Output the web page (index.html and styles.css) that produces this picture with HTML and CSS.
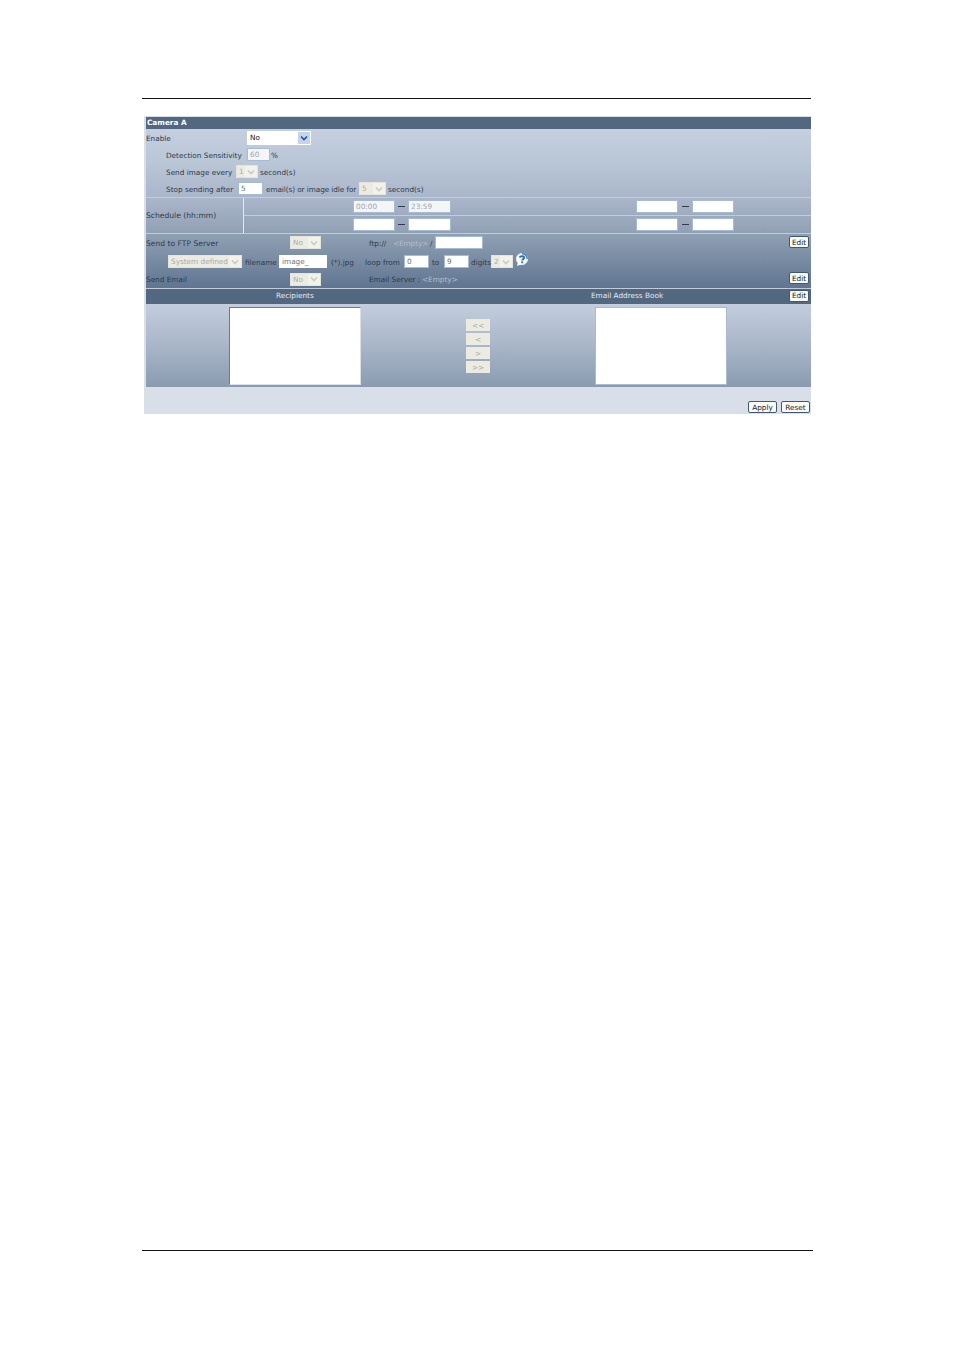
FILE: index.html
```html
<!DOCTYPE html>
<html lang="en">
<head>
    <meta charset="UTF-8">
    <link rel="stylesheet" href="styles.css">
    <title>Camera A</title>
</head>
<body>
    <div class="page">
        <hr class="rule">
        <div class="panel">
            <div class="title">Camera A</div>
            <div class="settings">
                <div class="row row-enable">
                    <span class="lbl w101">Enable</span>
                    <span class="sel sel-on w64"><span class="val">No</span><span class="arrow"><svg width="8" height="6" viewBox="0 0 8 6"><path d="M1 1.5L4 4.5L7 1.5" fill="none" stroke="#2a4fa0" stroke-width="1.6"/></svg></span></span>
                </div>
                <div class="row">
                    <span class="lbl indent w81">Detection Sensitivity</span>
                    <span class="inp off w23">60</span><span class="lbl after">%</span>
                </div>
                <div class="row">
                    <span class="lbl indent w70">Send image every</span>
                    <span class="sel w22"><span class="val">1</span><span class="arrow"><svg width="8" height="6" viewBox="0 0 8 6"><path d="M1 1.5L4 4.5L7 1.5" fill="none" stroke="#c8ccc4" stroke-width="1.6"/></svg></span></span>
                    <span class="lbl gap2">second(s)</span>
                </div>
                <div class="row">
                    <span class="lbl indent w72">Stop sending after</span>
                    <span class="inp w25">5</span>
                    <span class="lbl gap3 w93 tight">email(s) or image idle for</span>
                    <span class="sel w27"><span class="val">5</span><span class="arrow"><svg width="8" height="6" viewBox="0 0 8 6"><path d="M1 1.5L4 4.5L7 1.5" fill="none" stroke="#c8ccc4" stroke-width="1.6"/></svg></span></span>
                    <span class="lbl gap2">second(s)</span>
                </div>
                <div class="schedule">
                    <div class="lbl sched-label">Schedule (hh:mm)</div>
                    <div class="sched-times">
                        <div class="sched-row">
                            <span class="inp off w42">00:00</span><span class="dash"></span><span class="inp off w43">23:59</span>
                            <span class="inp w42 sched-second"></span><span class="dash dash-wide"></span><span class="inp w42"></span>
                        </div>
                        <div class="sched-row">
                            <span class="inp w42"></span><span class="dash"></span><span class="inp w43"></span>
                            <span class="inp w42 sched-second"></span><span class="dash dash-wide"></span><span class="inp w42"></span>
                        </div>
                    </div>
                </div>
                <div class="row row-ftp">
                    <span class="lbl w144 wide">Send to FTP Server</span>
                    <span class="sel w31"><span class="val">No</span><span class="arrow"><svg width="8" height="6" viewBox="0 0 8 6"><path d="M1 1.5L4 4.5L7 1.5" fill="none" stroke="#c8ccc4" stroke-width="1.6"/></svg></span></span>
                    <span class="lbl ml48 w24">ftp://</span>
                    <span class="lbl empty w37 tight">&lt;Empty&gt;</span>
                    <span class="lbl w5">/</span>
                    <span class="inp w48"></span>
                    <span class="btn edit">Edit</span>
                </div>
                <div class="row row-file">
                    <span class="sel w74 ml22"><span class="val">System defined</span><span class="arrow"><svg width="8" height="6" viewBox="0 0 8 6"><path d="M1 1.5L4 4.5L7 1.5" fill="none" stroke="#c8ccc4" stroke-width="1.6"/></svg></span></span>
                    <span class="lbl ml3 w34">filename</span>
                    <span class="inp w48 file-name">image_</span>
                    <span class="lbl ml4 w34">(*).jpg</span>
                    <span class="lbl w39">loop from</span>
                    <span class="inp w25">0</span>
                    <span class="lbl ml3 w12">to</span>
                    <span class="inp w25">9</span>
                    <span class="lbl ml2 w20">digits</span>
                    <span class="sel w22"><span class="val">2</span><span class="arrow"><svg width="8" height="6" viewBox="0 0 8 6"><path d="M1 1.5L4 4.5L7 1.5" fill="none" stroke="#c8ccc4" stroke-width="1.6"/></svg></span></span>
                    <svg class="help" width="14" height="14" viewBox="0 0 14 14"><circle cx="7" cy="6" r="5.6" fill="#fff" stroke="#dfe8f4" stroke-width="1"/><path d="M3 9L2 13L7 11Z" fill="#fff"/><path d="M7 0.8A5.2 5.2 0 0 1 12.2 6" fill="none" stroke="#3a78c8" stroke-width="1.4"/><path d="M4.8 4.6C5 2.8 9.2 2.6 9.2 4.8C9.2 6.2 7.2 6 7.2 7.6" fill="none" stroke="#2a6fc0" stroke-width="1.9"/><rect x="6.2" y="8.4" width="2" height="1.8" fill="#2a6fc0"/></svg>
                </div>
                <div class="row row-mail">
                    <span class="lbl w144">Send Email</span>
                    <span class="sel w31"><span class="val">No</span><span class="arrow"><svg width="8" height="6" viewBox="0 0 8 6"><path d="M1 1.5L4 4.5L7 1.5" fill="none" stroke="#c8ccc4" stroke-width="1.6"/></svg></span></span>
                    <span class="lbl ml48 w53">Email Server :</span>
                    <span class="lbl empty">&lt;Empty&gt;</span>
                    <span class="btn edit">Edit</span>
                </div>
            </div>
            <div class="list-head">
                <span class="head-a">Recipients</span>
                <span class="head-b">Email Address Book</span>
                <span class="btn edit">Edit</span>
            </div>
            <div class="lists">
                <div class="listbox"></div>
                <div class="movers">
                    <span class="mover">&lt;&lt;</span>
                    <span class="mover">&lt;</span>
                    <span class="mover">&gt;</span>
                    <span class="mover">&gt;&gt;</span>
                </div>
                <div class="listbox"></div>
            </div>
            <div class="actions">
                <span class="btn apply">Apply</span>
                <span class="btn reset">Reset</span>
            </div>
        </div>
        <hr class="rule rule-bottom">
    </div>
</body>
</html>
```

FILE: styles.css
```css
body {
    margin: 0;
    background-color: #ffffff;
    font-family: "DejaVu Sans", sans-serif;
    font-size: 7.3px;
    color: #2f3b4a;
}

.page {
    width: 954px;
    height: 1350px;
    padding-top: 98px;
    padding-left: 142px;
    box-sizing: border-box;
}

.rule {
    width: 669px;
    height: 1px;
    margin: 0;
    border: none;
    background-color: #111;
}

.rule-bottom {
    width: 671px;
    margin-top: 836px;
}

.panel {
    width: 667px;
    height: 298px;
    margin-top: 17px;
    margin-left: 2px;
    background-color: #d8dfe8;
    padding-top: 1px;
    box-sizing: border-box;
}

.title {
    height: 12px;
    line-height: 12px;
    margin-left: 2px;
    padding-left: 1px;
    background-color: #526880;
    color: #fff;
    font-weight: bold;
}

.settings {
    height: 159px;
    margin-left: 2px;
    background: linear-gradient(#c6cfdf, #b9c7d6 20%, #a9b4c9 45%, #8d9eb1 68%, #5f7590);
}

.row {
    display: flex;
    align-items: center;
    height: 17px;
    position: relative;
}

.row-ftp {
    height: 18px;
    box-sizing: border-box;
    border-top: 1px solid #c3ccd9;
}

.row-file {
    height: 19px;
    box-sizing: border-box;
    padding-top: 2px;
}

.row-mail {
    height: 18px;
}

.lbl {
    white-space: nowrap;
    padding-top: 1px;
}

.row-mail .lbl {
    padding-top: 0;
}

.tight { letter-spacing: -0.08px; }
.wide { font-size: 7.6px; }

.indent { margin-left: 20px; }
.after { margin-left: 1px; }
.gap2 { margin-left: 2px; }
.gap3 { margin-left: 3px; }
.empty { color: #b4bdc9; }

.ml2 { margin-left: 2px; }
.ml3 { margin-left: 3px; }
.ml4 { margin-left: 4px; }
.ml22 { margin-left: 22px; }
.ml48 { margin-left: 48px; }

.w5 { width: 5px; }
.w12 { width: 12px; }
.w20 { width: 20px; }
.w22 { width: 22px; }
.w23 { width: 23px; }
.w24 { width: 24px; }
.w25 { width: 25px; }
.w27 { width: 27px; }
.w31 { width: 31px; }
.w34 { width: 34px; }
.w37 { width: 37px; }
.w39 { width: 39px; }
.w42 { width: 42px; }
.w43 { width: 43px; }
.w48 { width: 48px; }
.w53 { width: 53px; }
.w64 { width: 64px; }
.w70 { width: 70px; }
.w72 { width: 72px; }
.w74 { width: 74px; }
.w81 { width: 81px; }
.w93 { width: 93px; }
.w101 { width: 101px; }
.w144 { width: 144px; }

.inp, .sel {
    display: flex;
    align-items: center;
    flex: none;
    height: 13px;
    box-sizing: border-box;
    background-color: #fff;
    border: 1px solid #a8bbd4;
    color: #6a7580;
    padding-left: 2px;
    overflow: hidden;
    white-space: nowrap;
}

.inp.off {
    color: #a0a8ae;
    background-color: #f4f6f6;
}

.sel {
    justify-content: space-between;
    background-color: #ecebe2;
    border-color: #e4e4dc;
    color: #a8aca8;
    padding-right: 0;
}

.sel-on {
    background-color: #fff;
    color: #111;
    height: 14px;
    border-color: #fff;
}

.arrow {
    display: flex;
    align-items: center;
    justify-content: center;
    width: 12px;
    flex: none;
    height: 100%;
    background-color: #f2f1ea;
}

.sel-on .arrow {
    background-color: #c4d4ec;
}

.schedule {
    display: flex;
    height: 36px;
    border-top: 1px solid #c3ccd9;
    box-sizing: border-box;
}

.sched-label {
    width: 97px;
    padding-top: 0;
    font-size: 7.6px;
    line-height: 35px;
    border-right: 1px solid #e4e9ef;
}

.sched-times {
    flex: 1;
}

.sched-row {
    display: flex;
    align-items: center;
    height: 17px;
    padding-left: 109px;
    border-bottom: 1px solid #c3ccd9;
}

.dash {
    width: 7px;
    height: 1px;
    margin: 0 3px;
    background-color: #2f3b4a;
}

.dash-wide {
    margin: 0 3.5px;
}

.sched-second {
    margin-left: 185px;
}

.file-name {
    border-color: #fff;
}

.help {
    flex: none;
    margin-left: 2px;
    margin-top: -3px;
}

.btn {
    display: flex;
    align-items: center;
    justify-content: center;
    box-sizing: border-box;
    height: 12px;
    background-color: #fbfbf6;
    border: 1px solid #3f5878;
    border-radius: 2px;
    color: #222;
}

.edit {
    position: absolute;
    right: 2px;
    top: 2px;
    width: 20px;
}

.list-head .edit { top: 1px; }

.list-head {
    position: relative;
    height: 16px;
    margin-left: 2px;
    border-top: 1px solid #c3ccd9;
    box-sizing: border-box;
    background-color: #526880;
    color: #e6ebf1;
    line-height: 14px;
}

.head-a {
    position: absolute;
    left: 130px;
}

.head-b {
    position: absolute;
    left: 445px;
}

.lists {
    display: flex;
    height: 83px;
    margin-left: 2px;
    padding-top: 3px;
    box-sizing: border-box;
    background: linear-gradient(#c3cddd, #a9b6c9 50%, #8a9bb0);
}

.listbox {
    flex: none;
    width: 132px;
    height: 78px;
    box-sizing: border-box;
    margin-left: 83px;
    background-color: #fff;
    border: 1px solid #d9e0ea;
    border-left-color: #6e7a88;
    border-top-color: #6e7a88;
}

.listbox:last-child {
    margin-left: 0;
    border-color: #a8bbd4;
}

.movers {
    display: flex;
    flex-direction: column;
    gap: 2px;
    width: 234px;
    padding: 12px 0 0 105px;
    box-sizing: border-box;
}

.mover {
    display: flex;
    align-items: center;
    justify-content: center;
    width: 24px;
    height: 12px;
    background-color: #ecebe2;
    color: #a8aca8;
}

.actions {
    display: flex;
    justify-content: flex-end;
    gap: 4px;
    height: 27px;
    padding-top: 14px;
    padding-right: 1px;
    box-sizing: border-box;
}

.apply { width: 29px; }
.reset { width: 29px; }
```
